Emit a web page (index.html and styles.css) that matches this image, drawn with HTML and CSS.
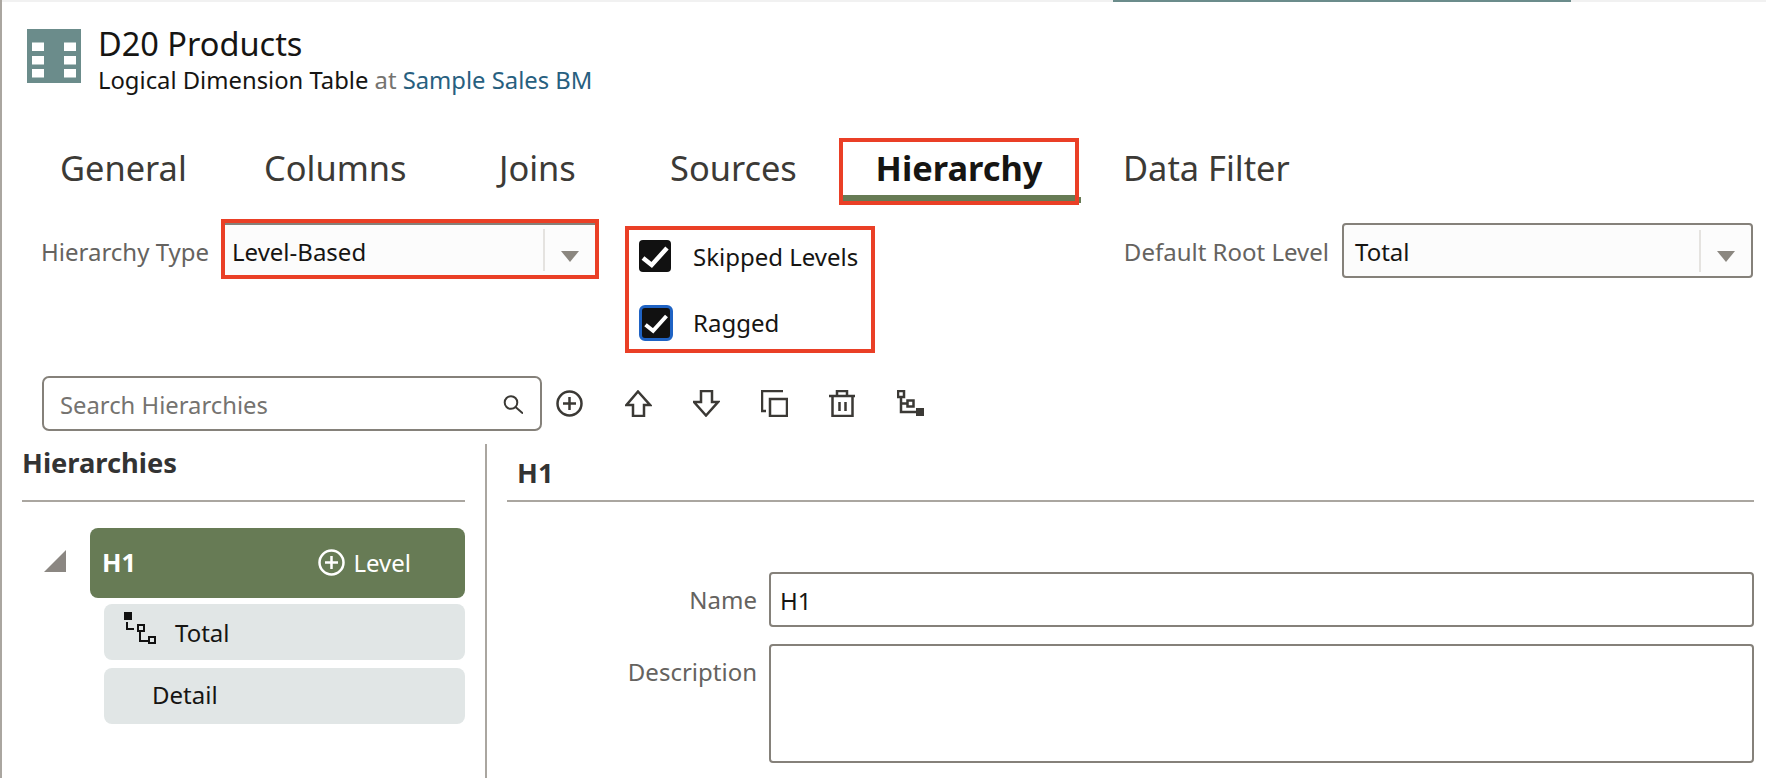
FILE: index.html
```html
<!DOCTYPE html>
<html lang="en">
<head>
    <meta charset="UTF-8">
    <meta name="viewport" content="width=device-width, initial-scale=1.0">
    <title>D20 Products</title>
    <link rel="stylesheet" href="styles.css">
</head>
<body>
    <div class="page">
        <div class="top-strip"><div class="top-strip-active"></div></div>

        <div class="header">
            <svg class="table-icon" viewBox="0 0 54 54">
                <rect width="54" height="54" fill="#6b8c8b"/>
                <g fill="#fff">
                    <rect x="5" y="13.500" width="12" height="8.500"/>
                    <rect x="37" y="13.500" width="12" height="8.500"/>
                    <rect x="5" y="27" width="12" height="8.500"/>
                    <rect x="37" y="27" width="12" height="8.500"/>
                    <rect x="5" y="40" width="12" height="8.500"/>
                    <rect x="37" y="40" width="12" height="8.500"/>
                </g>
            </svg>
            <div class="header-text">
                <div class="title">D20 Products</div>
                <div class="subtitle">Logical Dimension Table <span class="muted">at</span> <a class="link">Sample Sales BM</a></div>
            </div>
        </div>

        <div class="tabs">
            <div class="tab">General</div>
            <div class="tab">Columns</div>
            <div class="tab">Joins</div>
            <div class="tab">Sources</div>
            <div class="tab tab-active">Hierarchy</div>
            <div class="tab">Data Filter</div>
        </div>

        <div class="options">
            <div class="field-label field-label-left">Hierarchy Type</div>
            <div class="marked marked-select">
                <div class="select select-bare">
                    <span class="select-value">Level-Based</span>
                    <span class="select-end"><span class="select-arrow"></span></span>
                </div>
            </div>
            <div class="marked checks">
                <div class="check-row">
                    <span class="checkbox">
                        <svg viewBox="0 0 32 32"><path d="M4 18l8.700 7L28 8" fill="none" stroke="#fff" stroke-width="4.500"/></svg>
                    </span>
                    <span class="check-label">Skipped Levels</span>
                </div>
                <div class="check-row check-row-focus">
                    <span class="checkbox checkbox-focus">
                        <svg viewBox="0 0 32 32"><path d="M4 18l8.700 7L28 8" fill="none" stroke="#fff" stroke-width="4.500"/></svg>
                    </span>
                    <span class="check-label">Ragged</span>
                </div>
            </div>
            <div class="root-level">
                <div class="field-label">Default Root Level</div>
                <div class="select">
                    <span class="select-value">Total</span>
                    <span class="select-end"><span class="select-arrow"></span></span>
                </div>
            </div>
        </div>

        <div class="toolbar">
            <div class="search">
                <span class="search-text">Search Hierarchies</span>
                <svg class="search-icon" viewBox="0 0 20 20"><circle cx="8" cy="8.500" r="6.300" fill="none" stroke="#3b3935" stroke-width="2"/><path d="M12.500 13L20 19.500" stroke="#3b3935" stroke-width="2"/></svg>
            </div>
            <div class="tools">
                <svg class="tool tool-add" viewBox="0 0 27 27"><circle cx="13.500" cy="13.500" r="12" /><path d="M13.500 7v13M7 13.500h13"/></svg>
                <svg class="tool" viewBox="0 0 27 27"><path d="M13 1.500L25 15h-6v11H8V15H1.500z"/></svg>
                <svg class="tool" viewBox="0 0 27 27"><path d="M8 1h11v11h6L13 25.500 1 12h7z"/></svg>
                <svg class="tool" viewBox="0 0 27 27"><path d="M22 1H1v20h4"/><rect x="9" y="9" width="17" height="17"/></svg>
                <svg class="tool" viewBox="0 0 27 27"><path d="M0 6h26M8 6V1h10v5M3.500 6v20h20V6M10.500 12v9M16.500 12v9"/></svg>
                <svg class="tool" viewBox="0 0 27 27"><rect x="1" y="1" width="6" height="6"/><path d="M4 7v15h15M4 13.500h6"/><rect x="10.500" y="10.500" width="6" height="6"/><rect x="19" y="18" width="8" height="8" class="tool-solid"/></svg>
            </div>
        </div>

        <div class="split">
            <div class="pane-left">
                <h2 class="pane-title">Hierarchies</h2>
                <div class="tree">
                    <div class="tree-head">
                        <span class="tree-toggle"></span>
                        <div class="tree-root">
                            <strong>H1</strong>
                            <span class="add-level">
                                <svg viewBox="0 0 27 27"><circle cx="13.500" cy="13.500" r="12" fill="none" stroke="#fff" stroke-width="2.500"/><path d="M13.500 7v13M7 13.500h13" stroke="#fff" stroke-width="2.500"/></svg>
                                Level
                            </span>
                        </div>
                    </div>
                    <div class="tree-level tree-level-first">
                        <svg class="level-icon" viewBox="0 0 32 32">
                            <rect x="0" y="0" width="8" height="8" fill="#111"/>
                            <path d="M3 10v7h7M16 20v9h8" fill="none" stroke="#111" stroke-width="2"/>
                            <rect x="14" y="13" width="6" height="6" fill="none" stroke="#111" stroke-width="2"/>
                            <rect x="25" y="25" width="6" height="6" fill="none" stroke="#111" stroke-width="2"/>
                        </svg>
                        <span>Total</span>
                    </div>
                    <div class="tree-level tree-level-plain"><span>Detail</span></div>
                </div>
            </div>
            <div class="pane-right">
                <h2 class="pane-title pane-title-right">H1</h2>
                <div class="detail-form">
                    <label class="detail-label" for="hierName">Name</label>
                    <input class="detail-input" type="text" id="hierName" value="H1">
                    <label class="detail-label" for="hierDesc">Description</label>
                    <textarea class="detail-input detail-area" id="hierDesc"></textarea>
                </div>
            </div>
        </div>
    </div>
</body>
</html>
```
FILE: styles.css
```css
html, body {
    margin: 0;
    padding: 0;
    height: 100%;
    overflow: hidden;
    background-color: #fff;
}
body {
    font-family: "Noto Sans", "Open Sans", sans-serif;
    font-size: 24px;
    color: #161513;
}
.page {
    height: 778px;
    box-sizing: border-box;
    border-left: 2px solid #aaa6a0;
}
.top-strip {
    height: 2px;
    background-color: #f1f1f1;
}
.top-strip-active {
    height: 2px;
    width: 458px;
    margin-left: 1111px;
    background-color: #6b8c8b;
}
.header {
    display: flex;
    gap: 17px;
    padding: 27px 0 0 25px;
    height: 54px;
}
.table-icon {
    width: 54px;
    height: 54px;
    flex: none;
}
.title {
    font-size: 32.500px;
    line-height: 30px;
}
.subtitle {
    font-size: 23.800px;
    line-height: 30px;
    margin-top: 6px;
}
.muted {
    color: #757370;
}
.link {
    color: #27607f;
}
.tabs {
    display: grid;
    grid-template-columns: 204px 235px 171px 169px 284px auto;
    margin: 55px 0 0 58px;
    height: 67px;
}
.tab {
    font-size: 34.400px;
    line-height: 47px;
    padding-top: 6px;
    color: #3c3a36;
}
.tab-active {
    position: relative;
    width: 240px;
    height: 67px;
    box-sizing: border-box;
    text-align: center;
    font-weight: 700;
    color: #161513;
    border: 4px solid #ea3f26;
    padding-top: 2px;
    box-shadow: inset 0 -6px 0 #677b55;
}
/* the underline pokes out past the red marker */
.tab-active::after {
    content: "";
    position: absolute;
    right: -6px;
    bottom: -2px;
    width: 2px;
    height: 6px;
    background-color: #677b55;
}
.options {
    display: flex;
    align-items: flex-start;
    margin-top: 14px;
}
.field-label {
    color: #656360;
    line-height: 55px;
    white-space: nowrap;
}
.field-label-left {
    width: 180px;
    margin-left: 39px;
    padding-top: 5px;
}
.marked {
    box-sizing: border-box;
    border: 4px solid #ea3f26;
}
.marked-select {
    width: 378px;
    height: 60px;
    flex: none;
}
.select {
    display: flex;
    align-items: center;
    justify-content: space-between;
    box-sizing: border-box;
    width: 411px;
    height: 55px;
    padding-left: 11px;
    background-color: #fcfcfc;
    border: 2px solid #85817a;
    border-radius: 4px;
}
.select-bare {
    width: 100%;
    height: 52px;
    border-width: 2px 0 0 0;
    border-radius: 0;
    padding-left: 7px;
}
.select-value {
    margin-top: 2px;
}
.select-end {
    display: flex;
    align-items: center;
    justify-content: center;
    box-sizing: border-box;
    width: 52px;
    height: 42px;
    border-left: 2px solid #e5e3e0;
}
.select-arrow {
    width: 0;
    height: 0;
    margin-top: 12px;
    border-left: 9px solid transparent;
    border-right: 9px solid transparent;
    border-top: 11px solid #8b8780;
}
.checks {
    width: 250px;
    height: 127px;
    margin: 7px 0 0 26px;
    padding: 10px 0 0 10px;
    flex: none;
}
.check-row {
    display: flex;
    align-items: center;
    gap: 22px;
    height: 32px;
    line-height: 32px;
}
.check-row-focus {
    height: 34px;
    margin-top: 33px;
}
.check-label {
    margin-top: 2px;
}
.checkbox {
    display: block;
    box-sizing: border-box;
    width: 32px;
    height: 32px;
    background-color: #111;
    border-radius: 4px;
    flex: none;
}
.checkbox svg {
    display: block;
    width: 32px;
    height: 32px;
}
.checkbox-focus {
    align-self: flex-start;
    width: 34px;
    height: 36px;
    border: 3px solid #1f63c4;
    border-radius: 6px;
    margin-right: -2px;
}
.checkbox-focus svg {
    width: 28px;
    height: 30px;
}
.root-level {
    display: flex;
    gap: 13px;
    margin: 4px 13px 0 auto;
}
.root-level .field-label {
    line-height: 57px;
}
.toolbar {
    display: flex;
    align-items: center;
    gap: 15px;
    margin: 23px 0 0 40px;
}
.search {
    display: flex;
    align-items: center;
    justify-content: space-between;
    box-sizing: border-box;
    width: 500px;
    height: 55px;
    padding: 0 17px 0 16px;
    color: #757370;
    border: 2px solid #85817a;
    border-radius: 7px;
}
.search-text {
    font-size: 23.800px;
    margin-top: 2px;
}
.search-icon {
    width: 20px;
    height: 20px;
}
.tools {
    display: flex;
    gap: 41px;
}
.tool {
    display: block;
    width: 27px;
    height: 27px;
    fill: none;
    stroke: #3b3935;
    stroke-width: 2.500;
}
.tool-add {
    margin: 0 1px 0 -1px;
}
.tool .tool-solid {
    fill: #3b3935;
    stroke: none;
}
.split {
    display: grid;
    grid-template-columns: 485px 1fr;
    margin-top: 13px;
    height: 334px;
}
.pane-left {
    box-sizing: border-box;
    padding: 0 20px;
    border-right: 2px solid #aaa6a0;
}
.pane-right {
    padding: 0 12px 0 20px;
}
.pane-title {
    box-sizing: border-box;
    height: 58px;
    margin: 0;
    padding-top: 1px;
    font-size: 27.300px;
    line-height: 36px;
    font-weight: 700;
    color: #333;
    border-bottom: 2px solid #aaa6a0;
}
.pane-title-right {
    padding: 11px 0 0 10px;
}
.tree {
    padding-top: 26px;
}
.tree-head {
    display: flex;
    gap: 24px;
    padding-left: 22px;
}
.tree-toggle {
    width: 22px;
    height: 22px;
    margin-top: 22px;
    background-color: #8b8782;
    clip-path: polygon(100% 0, 100% 100%, 0 100%);
    flex: none;
}
.tree-root {
    display: flex;
    align-items: center;
    justify-content: space-between;
    box-sizing: border-box;
    flex: 1;
    height: 70px;
    padding: 0 54px 2px 12px;
    color: #fff;
    background-color: #677b55;
    border-radius: 8px;
}
.tree-root strong {
    font-size: 25.500px;
}
.add-level {
    display: flex;
    align-items: center;
    gap: 8px;
}
.add-level svg {
    width: 27px;
    height: 27px;
}
.tree-level {
    display: flex;
    align-items: center;
    box-sizing: border-box;
    height: 56px;
    margin: 8px 0 0 82px;
    background-color: #e1e6e6;
    border-radius: 8px;
}
.tree-level-first {
    margin-top: 6px;
    gap: 19px;
    padding-left: 20px;
}
.tree-level-plain {
    padding: 0 0 3px 48px;
}
.level-icon {
    width: 32px;
    height: 32px;
    margin-top: -8px;
}
.detail-form {
    display: grid;
    grid-template-columns: 250px 1fr;
    gap: 16px 12px;
    margin-top: 70px;
}
.detail-label {
    color: #656360;
    text-align: right;
    line-height: 56px;
}
.detail-input {
    display: block;
    box-sizing: border-box;
    width: 100%;
    height: 55px;
    margin: 0;
    padding: 2px 9px 0;
    font-family: inherit;
    font-size: 24px;
    color: #161513;
    background-color: #fff;
    border: 2px solid #85817a;
    border-radius: 4px;
    outline: none;
    resize: none;
}
.detail-area {
    height: 119px;
}
```
